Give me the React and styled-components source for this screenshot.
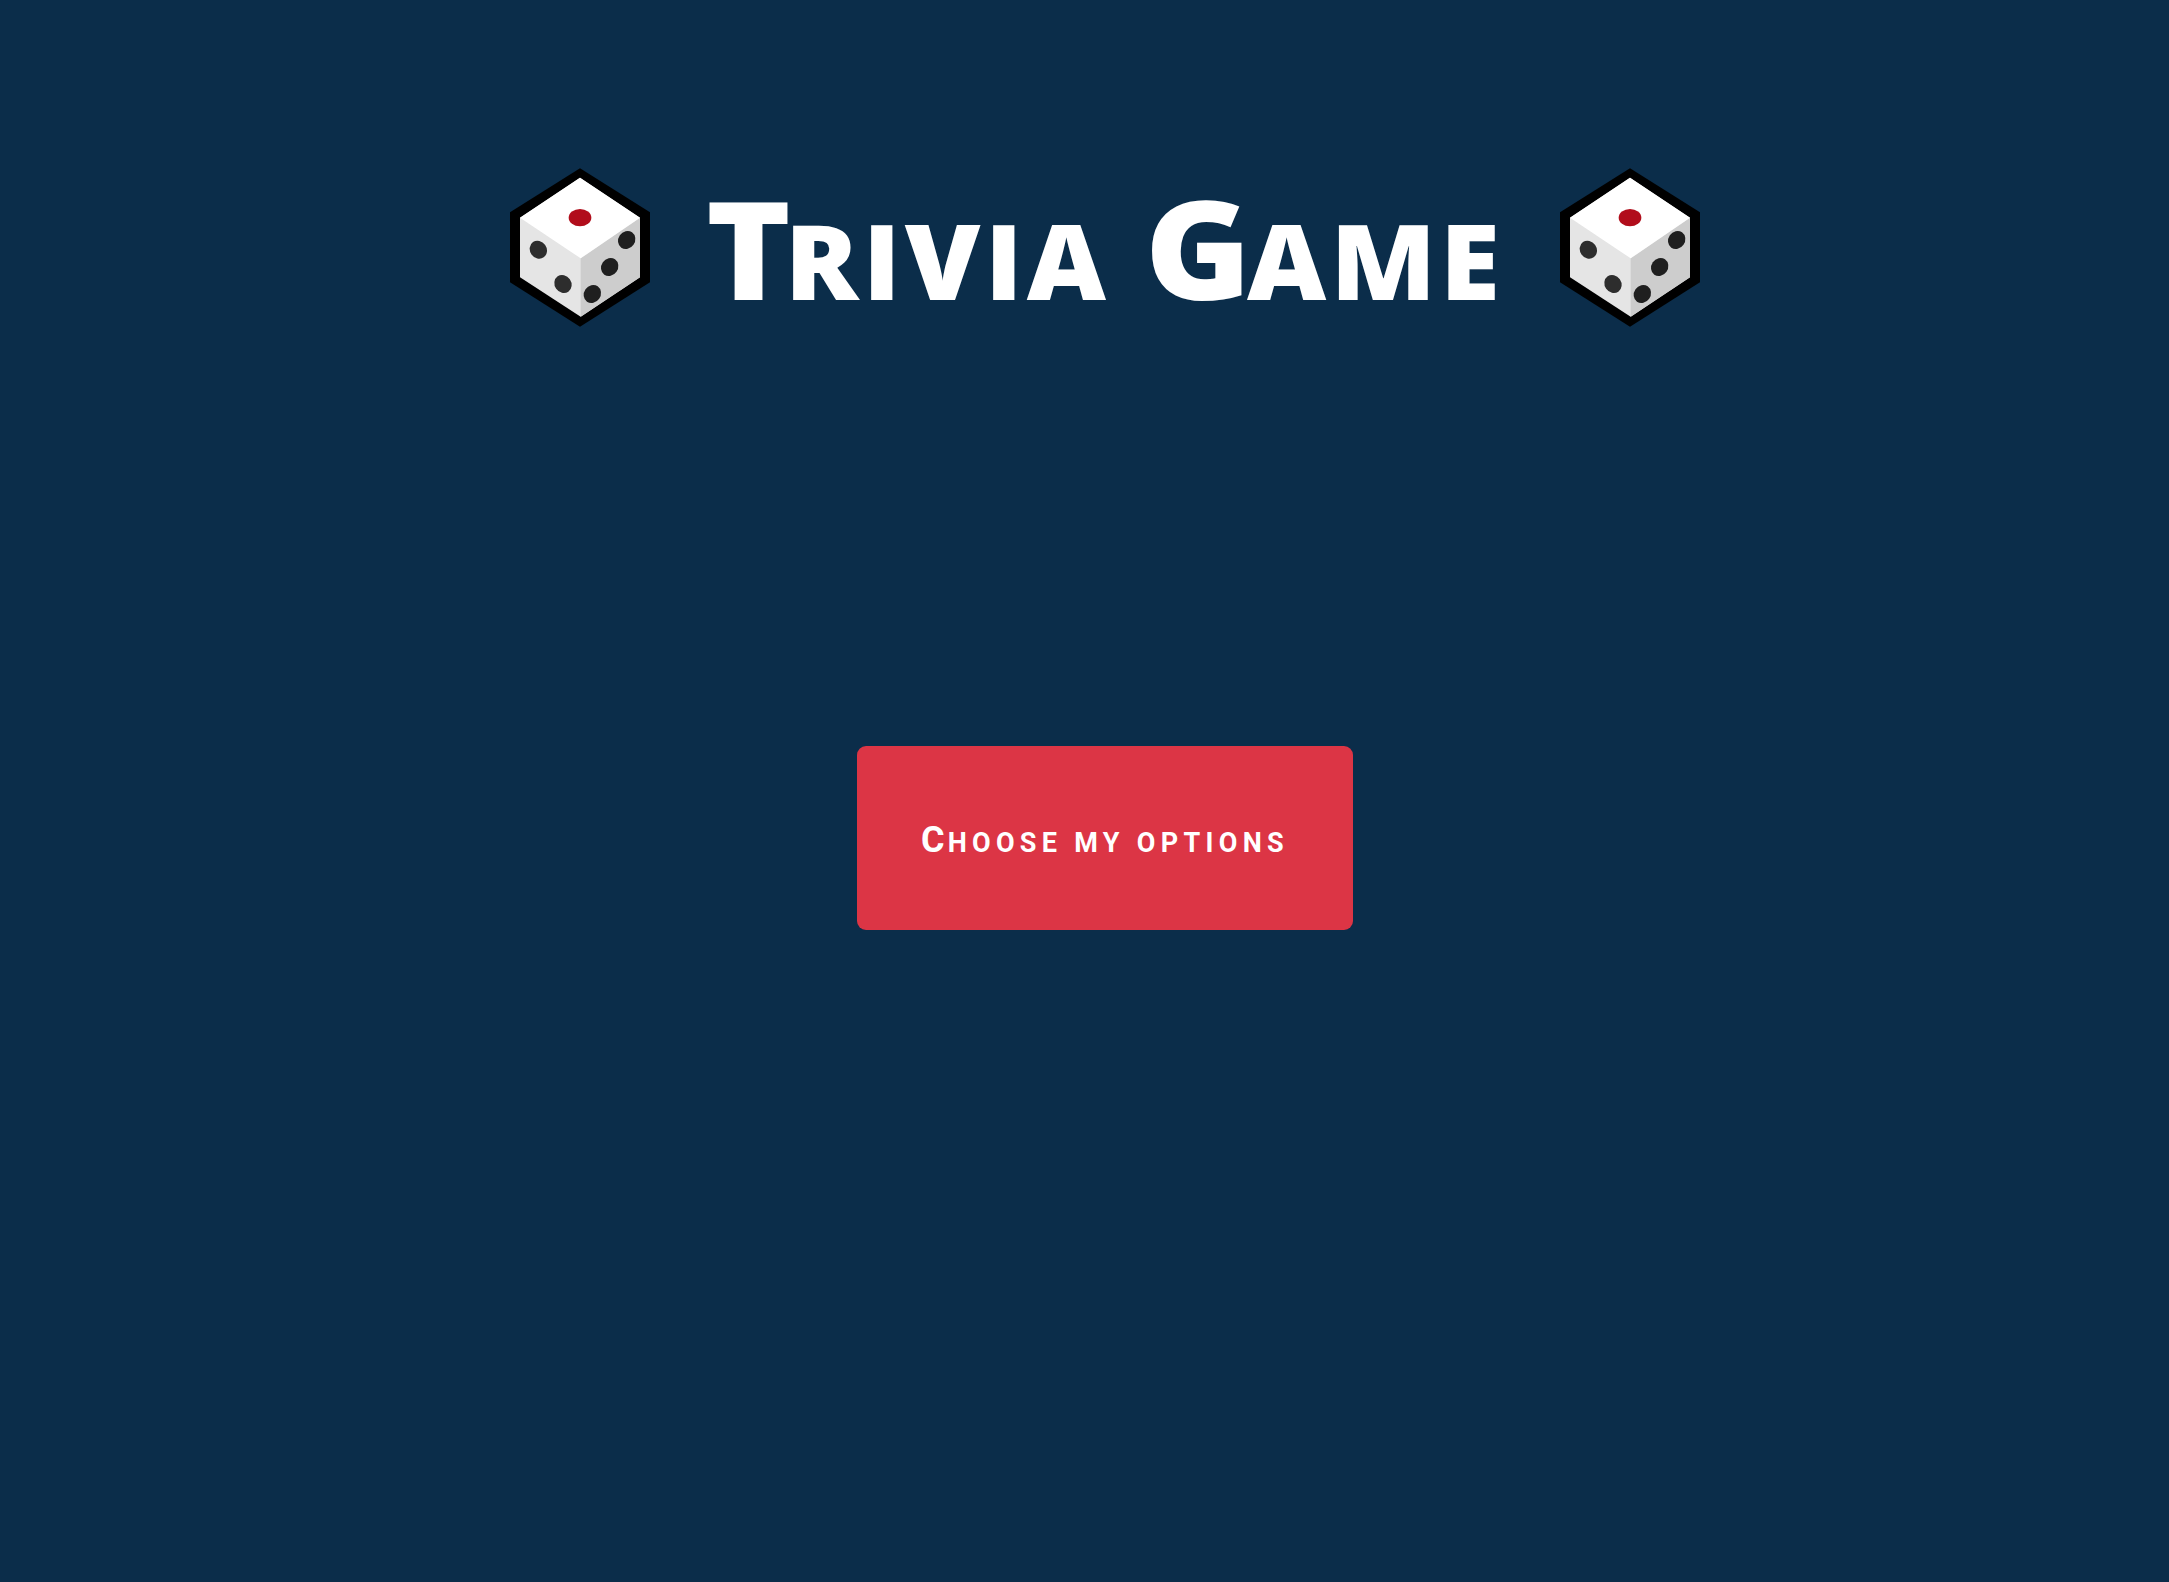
import React from 'react';
import styled, {createGlobalStyle} from 'styled-components';

const GlobalStyle = createGlobalStyle`
  html, body {
    margin: 0;
    background: #0b2d4a;
  }
`

const Page = styled.div`
  min-height: 1582px;
  box-sizing: border-box;
  padding: 168px 0 0 41px;
  display: flex;
  flex-direction: column;
  align-items: center;
`

const Header = styled.header`
  display: flex;
  align-items: center;
  justify-content: center;
  height: 159px;
`

const Title = styled.h1`
  margin: 0 75px;
  color: #fff;
  font-family: "Open Sans", sans-serif;
  font-size: 104px;
  font-weight: 800;
  text-transform: uppercase;
  letter-spacing: 3.9px;
  word-spacing: 2px;
  line-height: 1;
  white-space: nowrap;
  transform: scaleX(1.05);
`

// big first letters, they kern tighter than the rest of the title
const TitleCap = styled.span`
  font-size: 137px;
  letter-spacing: ${p => p.$tight}px;
`

const StartButton = styled.button`
  margin-top: 419px;
  padding: 3px 0 0;
  width: 496px;
  height: 184px;
  border: none;
  border-radius: 9px;
  background: #dc3545;
  color: #fff;
  font-family: Roboto, sans-serif;
  font-size: 27px;
  font-weight: 700;
  text-transform: uppercase;
  letter-spacing: 5.3px;
`

const ButtonCap = styled.span`
  font-size: 36px;
  letter-spacing: 3px;
`

function Die() {
  return (
    <svg width="140" height="159" viewBox="58 55 420 475" aria-hidden="true">
      <polygon fill="#000" points="268,55 478,187 478,397 268,530 58,397 58,187" />
      <polygon fill="#e5e5e5" points="268,83 448,203 448,382 270,500 88,382 88,203" />
      <polygon fill="#cdcdcd" points="270,325 448,203 448,382 270,500" />
      <polygon fill="#fff" points="268,83 448,203 270,325 88,203" />
      <ellipse cx="268" cy="203" rx="34" ry="26" fill="#b10d1b" />
      <ellipse cx="143" cy="299" rx="25" ry="28" fill="#2d2d2d" transform="rotate(-35 143 299)" />
      <ellipse cx="217" cy="402" rx="25" ry="28" fill="#2d2d2d" transform="rotate(-35 217 402)" />
      <ellipse cx="408" cy="270" rx="25" ry="28" fill="#1f1f1f" transform="rotate(35 408 270)" />
      <ellipse cx="357" cy="351" rx="25" ry="28" fill="#1f1f1f" transform="rotate(35 357 351)" />
      <ellipse cx="305" cy="432" rx="25" ry="28" fill="#1f1f1f" transform="rotate(35 305 432)" />
    </svg>
  );
}

export default function App() {
  return (
    <Page>
      <GlobalStyle />
      <Header>
        <Die />
        <Title><TitleCap $tight={-6}>T</TitleCap>rivia <TitleCap $tight={-4}>G</TitleCap>ame</Title>
        <Die />
      </Header>
      <StartButton><ButtonCap>C</ButtonCap>hoose my options</StartButton>
    </Page>
  );
}
